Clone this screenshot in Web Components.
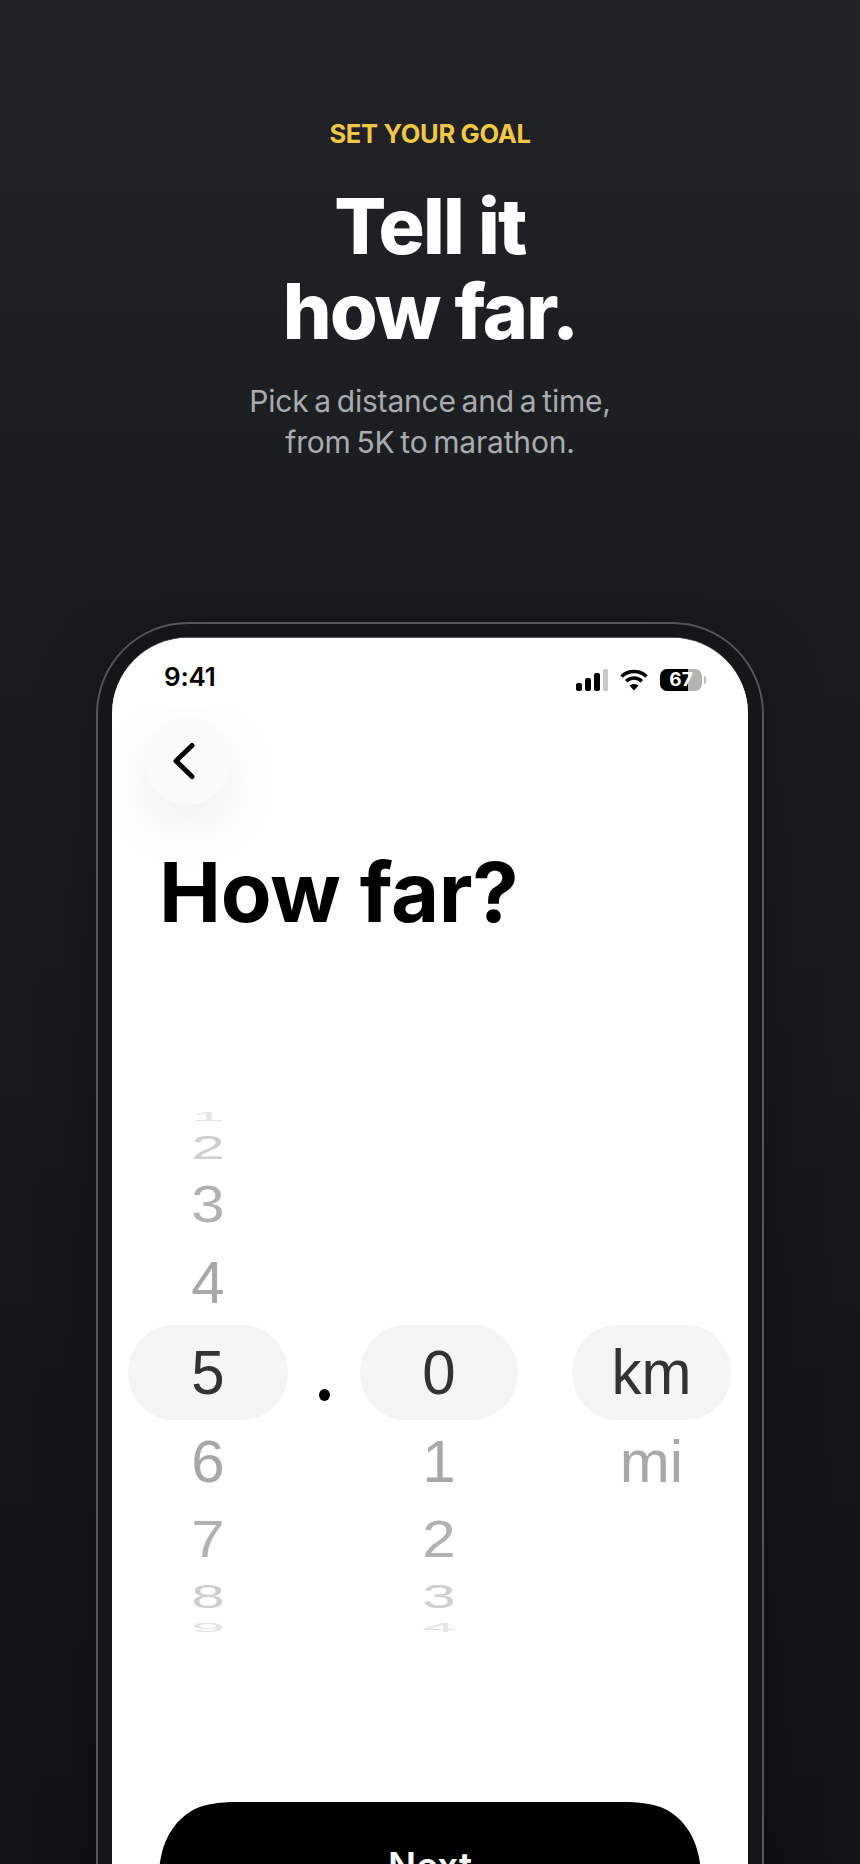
<!DOCTYPE html>
<html>
<head>
<meta charset="utf-8">
<style>
  html, body { margin: 0; padding: 0; background: #131416; }
</style>
</head>
<body>
<promo-page>
  <promo-hero slot="hero" eyebrow="SET YOUR GOAL" sub="Pick a distance and a time,|from 5K to marathon.">Tell it<br>how far.</promo-hero>
  <phone-frame slot="phone">
    <status-bar></status-bar>
    <back-button></back-button>
    <screen-title>How far?</screen-title>
    <distance-picker></distance-picker>
    <next-button>Next</next-button>
  </phone-frame>
</promo-page>

<script>
// page shell
class promoPage extends HTMLElement {
    constructor() {
        super();
        this.attachShadow({ mode: 'open' });
        this.shadowRoot.innerHTML = `<style>
            :host {
                display: block;
                height: 1864px;
                overflow: hidden;
                background: linear-gradient(180deg, #212326 0%, #1a1b1e 35%, #111214 100%);
                font-family: Inter, "Liberation Sans", sans-serif;
            }
        </style>
        <slot name="hero"></slot>
        <slot name="phone"></slot>`;
    }
}

class promoHero extends HTMLElement {
    constructor() {
        super();
        this.attachShadow({ mode: 'open' });
    }

    connectedCallback() {
        const sub = this.getAttribute('sub').split('|').join('<br>');
        this.shadowRoot.innerHTML = `<style>
            :host {
                display: block;
                padding-top: 118px;
                height: 505px;
                box-sizing: border-box;
                text-align: center;
            }
            .eyebrow {
                color: #f2c743;
                font-size: 25.5px;
                line-height: 32px;
                font-weight: 700;
                letter-spacing: -0.3px;
            }
            h1 {
                margin: 34px 0 0;
                color: #fff;
                font-size: 77px;
                line-height: 85px;
                font-weight: 800;
                letter-spacing: -1.8px;
            }
            p {
                margin: 27px 0 0;
                color: #a9abb0;
                font-size: 30px;
                line-height: 41px;
                font-weight: 400;
                letter-spacing: -0.2px;
                word-spacing: -2.4px;
            }
        </style>
        <div class="eyebrow">${this.getAttribute('eyebrow')}</div>
        <h1><slot></slot></h1>
        <p>${sub}</p>`;
    }
}

class phoneFrame extends HTMLElement {
    constructor() {
        super();
        this.attachShadow({ mode: 'open' });
        this.shadowRoot.innerHTML = `<style>
            :host {
                display: block;
                box-sizing: border-box;
                width: 668px;
                margin: 117px 0 0 96px;
                padding: 14px 14px 0;
                height: 1400px;
                background: #151618;
                border: 2px solid #55565a;
                border-radius: 92px;
                box-shadow: 0 0 60px rgba(0,0,0,.25);
            }
            .screen {
                height: 1400px;
                background: #fff;
                border-radius: 76px 76px 0 0;
                overflow: hidden;
                box-shadow: 0 -1px 0 #5a5b5e;
                color: #000;
            }
        </style>
        <div class="screen"><slot></slot></div>`;
    }
}

class statusBar extends HTMLElement {
    constructor() {
        super();
        this.attachShadow({ mode: 'open' });
        this.shadowRoot.innerHTML = `<style>
            :host {
                display: flex;
                align-items: center;
                justify-content: space-between;
                position: relative;
                z-index: 1;
                height: 68px;
                box-sizing: border-box;
                padding: 8px 46px 0 52px;
                background: #fff;
            }
            .time {
                font-size: 26px;
                font-weight: 600;
                letter-spacing: -0.2px;
            }
            .icons { display: flex; align-items: center; gap: 12px; margin-top: 8px; }
            .battery {
                position: relative;
                width: 42px;
                height: 22px;
                border-radius: 7px;
                background: linear-gradient(90deg, #000 0 67%, #b4b4b4 67% 100%);
                color: #fff;
                font-size: 19px;
                font-weight: 700;
                line-height: 22px;
                text-align: center;
            }
            .cap {
                position: absolute;
                left: 44px;
                top: 7px;
                width: 2px;
                height: 8px;
                border-radius: 0 2px 2px 0;
                background: #bdbdbd;
            }
        </style>
        <span class="time">9:41</span>
        <div class="icons">
            <svg width="32" height="22" viewBox="0 0 32 22">
                <rect x="0" y="14" width="6" height="8" rx="2"/>
                <rect x="9" y="9" width="6" height="13" rx="2"/>
                <rect x="18" y="4" width="6" height="18" rx="2"/>
                <rect x="27" y="0" width="5" height="22" rx="1.5" fill="#c8c8c8"/>
            </svg>
            <svg width="28" height="22" viewBox="0 0 28 22" fill="none" stroke="#000" stroke-width="3.4">
                <path d="M1.5 7.5C8.5 .8 19.5 .8 26.5 7.5"/>
                <path d="M6.2 12.2C10.8 8 17.2 8 21.8 12.2"/>
                <path d="M14 21.5L9.4 16.6C12 14.4 16 14.4 18.6 16.6Z" fill="#000" stroke="none"/>
            </svg>
            <div class="battery">67<span class="cap"></span></div>
        </div>`;
    }
}

class backButton extends HTMLElement {
    constructor() {
        super();
        this.attachShadow({ mode: 'open' });
        this.shadowRoot.innerHTML = `<style>
            :host {
                display: flex;
                align-items: center;
                justify-content: center;
                width: 87px;
                height: 87px;
                margin: 12px 0 0 32px;
                border-radius: 50%;
                background: #fafafa;
                box-shadow: 0 20px 60px rgba(0,0,0,.08);
            }
            svg { margin-left: -7px; margin-top: -2px; }
        </style>
        <svg width="30" height="40" viewBox="0 0 30 40" fill="none" stroke="#000" stroke-width="5" stroke-linecap="round" stroke-linejoin="round">
            <path d="M23 4.500L7 20L23 35.500"/>
        </svg>`;
    }
}

class screenTitle extends HTMLElement {
    constructor() {
        super();
        this.attachShadow({ mode: 'open' });
        this.shadowRoot.innerHTML = `<style>
            :host {
                display: block;
                margin: 41px 0 0 47px;
                font-size: 83px;
                line-height: 92px;
                font-weight: 700;
                letter-spacing: -0.3px;
            }
        </style><slot></slot>`;
    }
}

// one wheel slot per distance from the centre row
const wheelRows = [
    { h: 20, s: .2, c: '#e4e4e4' },
    { h: 42, s: .55, c: '#cfcfcf' },
    { h: 72, s: .85, c: '#b2b2b2' },
    { h: 84, s: 1, c: '#a8a8a8' },
    { h: 95, s: 1.06, c: '#333' },
    { h: 84, s: 1, c: '#a8a8a8' },
    { h: 72, s: .85, c: '#b2b2b2' },
    { h: 42, s: .55, c: '#cfcfcf' },
    { h: 20, s: .2, c: '#e4e4e4' }
];

class pickerWheel extends HTMLElement {
    constructor() {
        super();
        this.attachShadow({ mode: 'open' });
    }

    connectedCallback() {
        const items = this.getAttribute('items').split(',');
        const first = 4 - Number(this.getAttribute('selected'));
        const rows = wheelRows.map((r, i) => {
            const text = items[i - first] ?? '';
            const cls = i === 4 ? 'row on' : 'row';
            return `<div class="${cls}" style="height:${r.h}px;color:${r.c}"><span style="transform:scaleY(${r.s})">${text}</span></div>`;
        }).join('');
        this.shadowRoot.innerHTML = `<style>
            :host {
                display: block;
                font-family: "Liberation Sans", Arial, sans-serif;
                font-size: 60px;
            }
            .row {
                display: flex;
                align-items: center;
                justify-content: center;
                overflow: hidden;
            }
            .row.on {
                background: #f5f5f5;
                border-radius: 46px / 48px;
            }
            span { display: block; line-height: 1; }
        </style>${rows}`;
    }
}

class distancePicker extends HTMLElement {
    constructor() {
        super();
        this.attachShadow({ mode: 'open' });
        this.shadowRoot.innerHTML = `<style>
            :host {
                display: grid;
                grid-template-columns: 160px 72px 158px 54px 159px;
                margin: 169px 0 0 16px;
            }
            .dot {
                align-self: start;
                justify-self: center;
                margin-top: 282px;
                width: 11px;
                height: 12px;
                border-radius: 50%;
                background: #000;
            }
        </style>
        <picker-wheel items="1,2,3,4,5,6,7,8,9" selected="4"></picker-wheel>
        <div class="dot"></div>
        <picker-wheel items="0,1,2,3,4" selected="0"></picker-wheel>
        <div></div>
        <picker-wheel items="km,mi" selected="0"></picker-wheel>`;
    }
}

class nextButton extends HTMLElement {
    constructor() {
        super();
        this.attachShadow({ mode: 'open' });
        this.shadowRoot.innerHTML = `<style>
            :host {
                display: block;
                box-sizing: border-box;
                width: 542px;
                height: 130px;
                margin: 164px 0 0 47px;
                padding-top: 44px;
                background: #000;
                color: #fff;
                text-align: center;
                font-size: 37px;
                line-height: 40px;
                font-weight: 600;
                clip-path: path('M0 70C2 40 14 22 28 12C38 4 50 1 72 0H470C492 1 504 4 514 12C528 22 540 40 542 70V130H0Z');
            }
        </style><slot></slot>`;
    }
}

customElements.define('promo-page', promoPage);
customElements.define('promo-hero', promoHero);
customElements.define('phone-frame', phoneFrame);
customElements.define('status-bar', statusBar);
customElements.define('back-button', backButton);
customElements.define('screen-title', screenTitle);
customElements.define('picker-wheel', pickerWheel);
customElements.define('distance-picker', distancePicker);
customElements.define('next-button', nextButton);
</script>
</body>
</html>
